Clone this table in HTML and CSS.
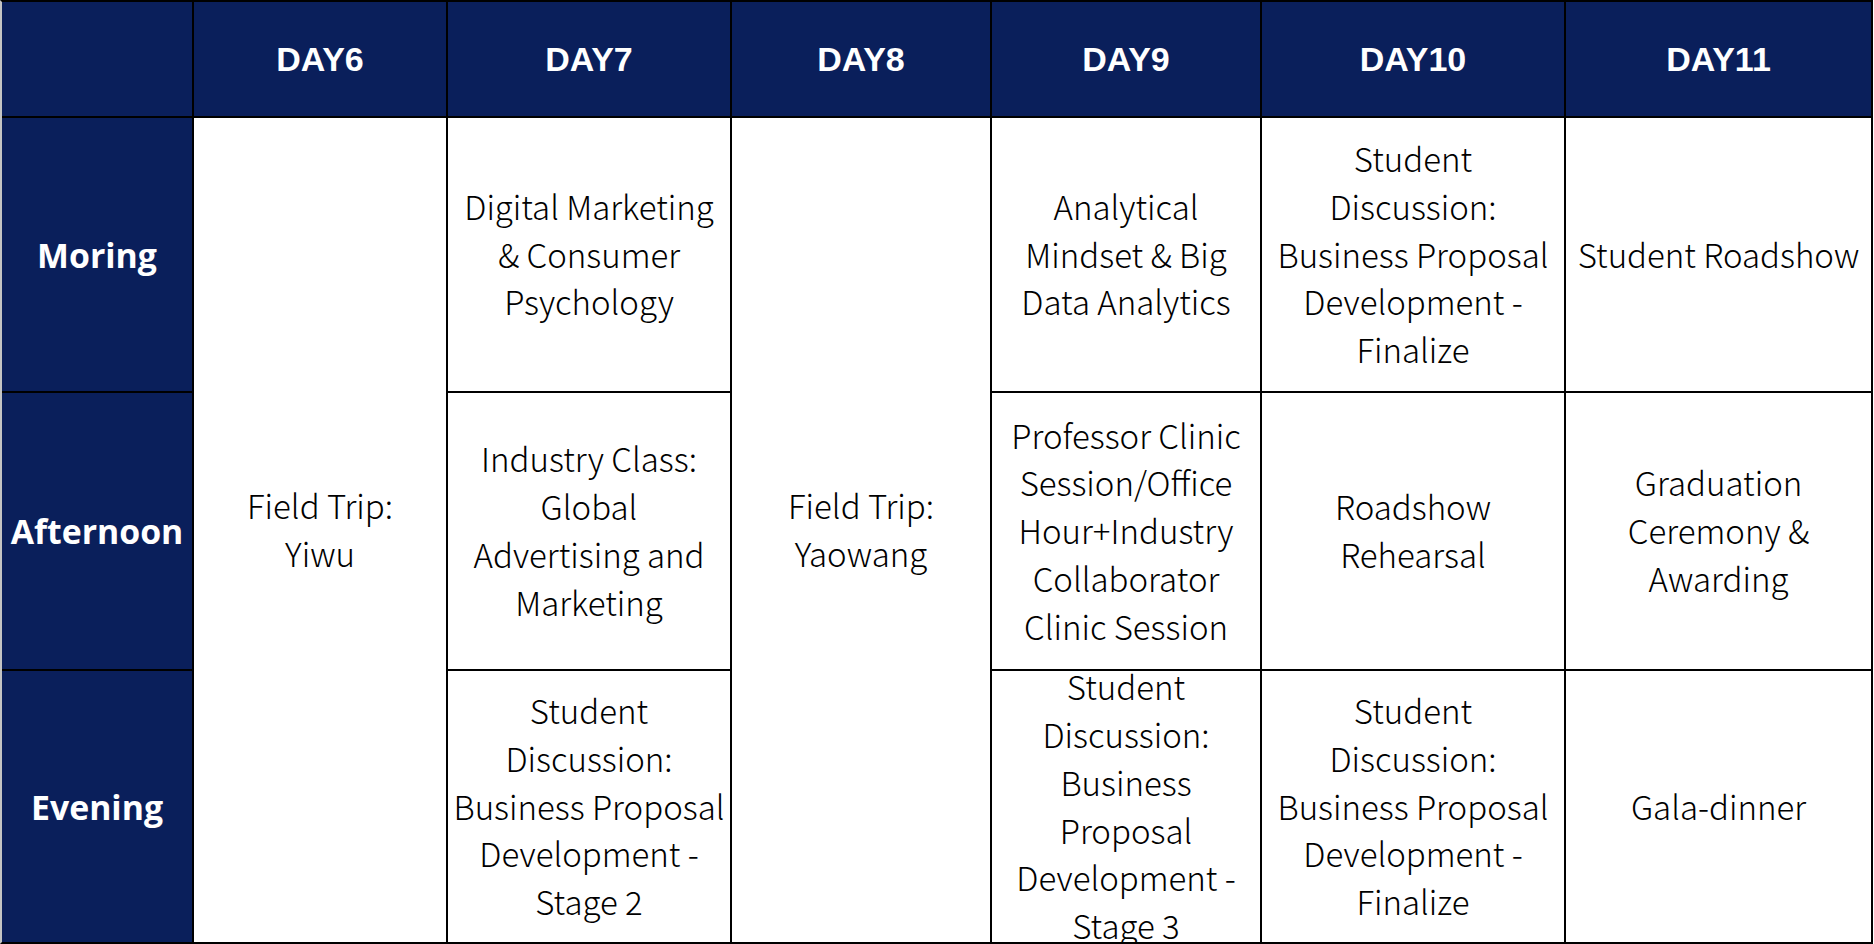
FILE: index.html
```html
<!DOCTYPE html>
<html lang="en">
<head>
<meta charset="utf-8">
<title>Programme Schedule DAY6 - DAY11</title>
<link rel="stylesheet" href="styles.css">
</head>
<body>
<div class="sheet">
  <div class="cell head corner"></div>
  <div class="cell head">DAY6</div>
  <div class="cell head">DAY7</div>
  <div class="cell head">DAY8</div>
  <div class="cell head">DAY9</div>
  <div class="cell head">DAY10</div>
  <div class="cell head">DAY11</div>

  <div class="cell label">Moring</div>
  <div class="cell body span3">Field Trip:<br>Yiwu</div>
  <div class="cell body">Digital Marketing<br>&amp; Consumer<br>Psychology</div>
  <div class="cell body span3">Field Trip:<br>Yaowang</div>
  <div class="cell body">Analytical<br>Mindset &amp; Big<br>Data Analytics</div>
  <div class="cell body">Student<br>Discussion:<br>Business Proposal<br>Development -<br>Finalize</div>
  <div class="cell body">Student Roadshow</div>

  <div class="cell label">Afternoon</div>
  <div class="cell body">Industry Class:<br>Global<br>Advertising and<br>Marketing</div>
  <div class="cell body">Professor Clinic<br>Session/Office<br>Hour+Industry<br>Collaborator<br>Clinic Session</div>
  <div class="cell body">Roadshow<br>Rehearsal</div>
  <div class="cell body">Graduation<br>Ceremony &amp;<br>Awarding</div>

  <div class="cell label">Evening</div>
  <div class="cell body">Student<br>Discussion:<br>Business Proposal<br>Development -<br>Stage 2</div>
  <div class="cell body">Student<br>Discussion:<br>Business<br>Proposal<br>Development -<br>Stage 3</div>
  <div class="cell body">Student<br>Discussion:<br>Business Proposal<br>Development -<br>Finalize</div>
  <div class="cell body">Gala-dinner</div>
</div>
</body>
</html>
```
FILE: styles.css
```css
html, body {
  margin: 0;
  padding: 0;
  background: #ffffff;
  overflow: hidden;
}

.sheet {
  display: grid;
  grid-template-columns: 190px 252px 282px 258px 268px 302px 305px;
  grid-template-rows: 114px 273px 276px 271px;
  gap: 2px;
  width: max-content;
  background: #000000;
  border-top: 2px solid #000000;
  border-right: 2px solid #000000;
  border-bottom: 2px solid #000000;
  border-left: 2px solid #c4c4c4;
}

.cell {
  display: flex;
  align-items: center;
  justify-content: center;
  text-align: center;
  overflow: hidden;
  white-space: nowrap;
}

.head {
  background: #0a1f5b;
  color: #ffffff;
  font-family: "Liberation Sans", Arial, sans-serif;
  font-weight: 700;
  font-size: 34px;
}

.label {
  background: #0a1f5b;
  color: #ffffff;
  font-family: "Open Sans", "Noto Sans", sans-serif;
  font-weight: 700;
  font-size: 33.8px;
}

.body {
  background: #ffffff;
  color: #000000;
  font-family: "Noto Sans CJK SC", "Noto Sans", sans-serif;
  font-weight: 300;
  font-size: 33px;
  line-height: 47.8px;
}

.span3 {
  grid-row: span 3;
}
```
